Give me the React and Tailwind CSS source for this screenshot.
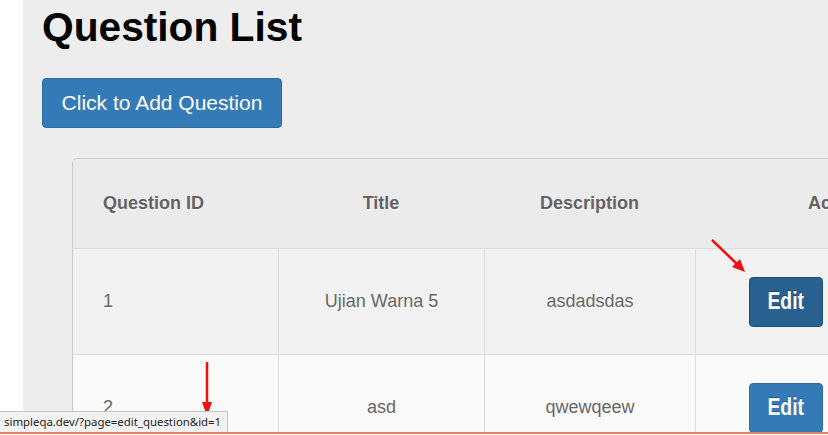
import React from 'react';

const rows = [
  { id: 1, title: 'Ujian Warna 5', description: 'asdadsdas', active: true },
  { id: 2, title: 'asd', description: 'qwewqeew', active: false },
];

const grid = 'grid grid-cols-[205px_206px_211px_282px]';

const App = () => {
  return (
    <div className="relative w-[828px] h-[435px] overflow-hidden flex bg-white font-['Liberation_Sans',Arial,sans-serif]">
      <div className="w-[23px] shrink-0 bg-white" />
      <div className="flex-1 bg-[#ededed] pl-[19px] pt-[5px] overflow-hidden">
        <h1 className="text-[40.7px] leading-[44px] font-bold text-black">Question List</h1>

        <button className="mt-[29px] h-[50px] w-[240px] rounded-[4px] bg-[#337ab7] border border-[#2e6da4] text-white text-[21px]">
          Click to Add Question
        </button>

        {/* Questions table */}
        <div className="mt-[30px] ml-[30px] w-[905px] border-l border-t border-[#cccccc] rounded-tl-[5px] overflow-hidden text-[18px]">
          <div className={`${grid} h-[89px] items-center bg-[#ebebeb] font-bold text-[#626262] [text-shadow:0_1px_0_#fff]`}>
            <div className="pl-[30px]">Question ID</div>
            <div className="text-center">Title</div>
            <div className="text-center">Description</div>
            <div className="text-center">Action</div>
          </div>

          {rows.map((row) => (
            <div
              key={row.id}
              className={`${grid} h-[106px] border-t border-[#dddddd] text-[#666] [text-shadow:0_1px_0_#fff] ${
                row.active ? 'bg-[#f2f2f2]' : 'bg-[#fafafa]'
              }`}
            >
              <div className="pl-[30px] flex items-center">{row.id}</div>
              <div className="border-l border-[#dddddd] flex items-center justify-center">{row.title}</div>
              <div className="border-l border-[#dddddd] flex items-center justify-center">{row.description}</div>
              <div className="border-l border-[#dddddd] flex items-center justify-center gap-[5px] pr-[2px]">
                <button
                  className={`h-[50px] w-[74px] rounded-[4px] border text-white font-bold [text-shadow:0_-1px_0_rgba(0,0,0,0.3)] ${
                    row.active ? 'bg-[#286090] border-[#204d74]' : 'bg-[#337ab7] border-[#2e6da4]'
                  }`}
                >
                  <span className="inline-block text-[23px] scale-x-[0.84]">Edit</span>
                </button>
                <button className="h-[50px] w-[94px] rounded-[4px] border border-[#d43f3a] bg-[#d9534f] text-white font-bold [text-shadow:0_-1px_0_rgba(0,0,0,0.3)]">
                  <span className="inline-block text-[23px] scale-x-[0.84]">Delete</span>
                </button>
              </div>
            </div>
          ))}
        </div>
      </div>

      {/* Annotation arrows */}
      <svg className="absolute left-0 top-0 pointer-events-none" width="828" height="435">
        <line x1="712" y1="240" x2="737" y2="264" stroke="#ee1111" strokeWidth="2.5" />
        <polygon points="745,272 732,267 740,259" fill="#ee1111" />
        <line x1="207" y1="362" x2="207" y2="404" stroke="#ee1111" strokeWidth="2.5" />
        <polygon points="207,416 202,402 212,402" fill="#ee1111" />
      </svg>

      {/* Browser status bar */}
      <div className="absolute left-0 top-[411px] h-[21px] w-[228px] bg-[#f2f2f2] border-t border-r border-[#c6c6c6] pl-[4px] text-[11.4px] leading-[19px] text-[#222] whitespace-nowrap overflow-hidden font-['Noto_Sans',sans-serif]">
        simpleqa.dev/?page=edit_question&amp;id=1
      </div>
      <div className="absolute left-0 right-0 top-[432px] h-[3px] border-t-2 border-[#e2865c] bg-[#f7f7f7]" />
    </div>
  );
};

export default App;
